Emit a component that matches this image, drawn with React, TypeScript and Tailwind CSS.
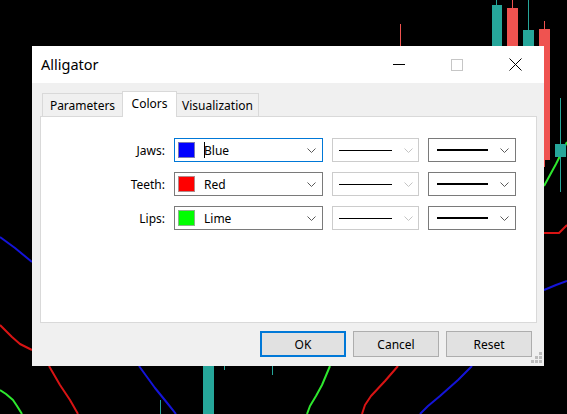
type Row = {
  label: string;
  name: string;
  color: string;
  swatchBorder: string;
  focused?: boolean;
};

const rows: Row[] = [
  { label: "Jaws:", name: "Blue", color: "bg-[#0000ff]", swatchBorder: "border-[#7a7ab4]", focused: true },
  { label: "Teeth:", name: "Red", color: "bg-[#ff0000]", swatchBorder: "border-[#b48a8a]" },
  { label: "Lips:", name: "Lime", color: "bg-[#00ff00]", swatchBorder: "border-[#8ab48a]" }
];

function Chevron({ light }: { light?: boolean }) {
  return (
    <svg width="9" height="5" viewBox="0 0 9 5" className="shrink-0">
      <path d="M0.5 0.5 L4.5 4.5 L8.5 0.5" fill="none" stroke={light ? "#c4c4c4" : "#5a5a5a"} strokeWidth="1" />
    </svg>
  );
}

function Chart() {
  const teal = "#26a69a";
  const red = "#ef5350";
  return (
    <svg className="absolute inset-0" width="567" height="414" viewBox="0 0 567 414">
      <g fill="none" strokeWidth="2" strokeLinejoin="round">
        <polyline stroke="#1414d8" points="0,237 15,248 32,262" />
        <polyline stroke="#d81414" points="0,325 12,337 20,344 32,350" />
        <polyline stroke="#2ee82e" points="0,390 6,394 13,400 17,406 22,414" />
        <polyline stroke="#d81414" points="49,366 60,385 70,400 78,414" />
        <polyline stroke="#1414d8" points="139,366 155,388 168,404 176,414" />
        <polyline stroke="#2ee82e" points="330,366 322,385 316,396 310,406 307,414" />
        <polyline stroke="#d81414" points="398,366 385,381 371,396 365,405 362,414" />
        <polyline stroke="#1414d8" points="472,366 458,380 440,396 428,406 420,414" />
        <polyline stroke="#d81414" points="544,233 559,233 567,225" />
        <polyline stroke="#1414d8" points="544,290 556,285 567,281" />
        <polyline stroke="#2ee82e" points="544,186 556,164 567,142" />
      </g>
      <g>
        <rect x="400" y="24" width="1" height="22" fill={red} />
        <rect x="496" y="0" width="1" height="6" fill={teal} />
        <rect x="492" y="5" width="10" height="41" fill={teal} />
        <rect x="512" y="0" width="1" height="9" fill={red} />
        <rect x="507" y="8" width="11" height="38" fill={red} />
        <rect x="528" y="0" width="1" height="31" fill={teal} />
        <rect x="523" y="30" width="11" height="16" fill={teal} />
        <rect x="544" y="21" width="1" height="146" fill={red} />
        <rect x="539" y="29" width="11" height="131" fill={red} />
        <rect x="560" y="98" width="1" height="94" fill={teal} />
        <rect x="555" y="144" width="11" height="13" fill={teal} />
        <rect x="203" y="366" width="11" height="48" fill={teal} />
        <rect x="224" y="366" width="1" height="4" fill={teal} />
        <rect x="272" y="366" width="1" height="9" fill={teal} />
        <rect x="160" y="400" width="1" height="14" fill={teal} />
      </g>
    </svg>
  );
}

export default function App() {
  return (
    <div className="relative h-[414px] w-[567px] overflow-hidden bg-black font-['Noto_Sans',sans-serif] text-[12px] text-black">
      <Chart />

      <div className="absolute left-[32px] top-[46px] flex h-[320px] w-[512px] flex-col">
        <div className="flex h-[37px] items-center bg-white">
          <span className="pl-[9px] text-[14.5px] leading-none">Alligator</span>
          <div className="ml-auto flex h-full">
            <div className="flex w-[58px] items-center justify-center">
              <div className="h-px w-[12px] bg-black" />
            </div>
            <div className="flex w-[58px] items-center justify-center">
              <div className="h-[12px] w-[12px] border border-[#c6c6c6]" />
            </div>
            <div className="flex w-[58px] items-center justify-center">
              <svg width="13" height="13" viewBox="0 0 13 13">
                <path d="M0.5 0.5 L12.5 12.5 M12.5 0.5 L0.5 12.5" stroke="#000" strokeWidth="1" />
              </svg>
            </div>
          </div>
        </div>

        <div className="relative flex flex-1 flex-col bg-[#f0f0f0] pl-[8px] pr-[7px] pt-[8px]">
          <div className="flex h-[25px] items-end pl-[2px]">
            <div className="flex h-[23px] w-[80px] items-center justify-center border border-b-0 border-r-0 border-[#d9d9d9] bg-[#f0f0f0] pt-[2px]">
              Parameters
            </div>
            <div className="relative z-10 -mb-px flex h-[26px] w-[55px] items-center justify-center border border-b-0 border-[#d9d9d9] bg-white pb-px">
              Colors
            </div>
            <div className="flex h-[23px] w-[82px] items-center justify-center border border-b-0 border-l-0 border-[#d9d9d9] bg-[#f0f0f0] pt-[2px]">
              Visualization
            </div>
          </div>

          <div className="flex h-[207px] flex-col gap-[10px] border border-[#d9d9d9] bg-white pt-[21px]">
            {rows.map((r) => (
              <div key={r.label} className="flex h-[24px] items-center">
                <div className="w-[124px] translate-y-px text-right">{r.label}</div>
                <div
                  className={`ml-[9px] flex h-full w-[149px] items-center border pl-[3px] ${
                    r.focused ? "border-[#0078d7]" : "border-[#7a7a7a]"
                  }`}
                >
                  <div className={`h-[16px] w-[17px] border ${r.swatchBorder} ${r.color}`} />
                  {r.focused ? (
                    <>
                      <div className="ml-[9px] h-[16px] w-px bg-black" />
                      <span className="-ml-px translate-y-px">{r.name}</span>
                    </>
                  ) : (
                    <span className="ml-[9px] translate-y-px">{r.name}</span>
                  )}
                  <div className="ml-auto mr-[6px] flex">
                    <Chevron />
                  </div>
                </div>
                <div className="ml-[9px] flex h-full w-[87px] items-center border border-[#cccccc] pl-[6px]">
                  <div className="h-px w-[53px] bg-black" />
                  <div className="ml-auto mr-[5px] flex">
                    <Chevron light />
                  </div>
                </div>
                <div className="ml-[9px] flex h-full w-[88px] items-center border border-[#7a7a7a] pl-[8px]">
                  <div className="h-[2px] w-[51px] bg-black" />
                  <div className="ml-auto mr-[6px] flex">
                    <Chevron />
                  </div>
                </div>
              </div>
            ))}
          </div>

          <div className="mt-[8px] flex justify-end gap-[7px] pr-[5px]">
            <button className="flex h-[26px] w-[86px] items-center justify-center border-2 border-[#0078d7] bg-[#e1e1e1] pt-[2px]">
              OK
            </button>
            <button className="flex h-[26px] w-[86px] items-center justify-center border border-[#adadad] bg-[#e1e1e1] pt-[2px]">
              Cancel
            </button>
            <button className="flex h-[26px] w-[86px] items-center justify-center border border-[#adadad] bg-[#e1e1e1] pt-[2px]">
              Reset
            </button>
          </div>

          <svg className="absolute bottom-[3px] right-[2px]" width="11" height="11" viewBox="0 0 11 11">
            <g fill="#bdbdbd">
              <rect x="8" y="0" width="3" height="3" />
              <rect x="4" y="4" width="3" height="3" />
              <rect x="8" y="4" width="3" height="3" />
              <rect x="0" y="8" width="3" height="3" />
              <rect x="4" y="8" width="3" height="3" />
              <rect x="8" y="8" width="3" height="3" />
            </g>
          </svg>
        </div>
      </div>
    </div>
  );
}
